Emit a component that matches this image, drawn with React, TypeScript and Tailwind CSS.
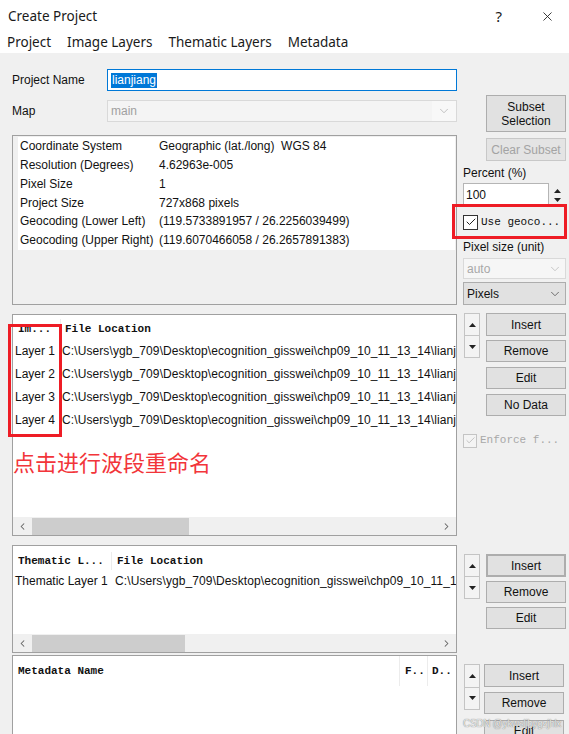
import React from "react";
import { ChevronDown, ChevronLeft, ChevronRight, X, Check } from "lucide-react";

const ui = "font-['Liberation_Sans',Arial,sans-serif]";
const mono = "font-['Liberation_Mono','DejaVu_Sans_Mono',monospace]";

const info = [
  ["Coordinate System", "Geographic (lat./long)  WGS 84"],
  ["Resolution (Degrees)", "4.62963e-005"],
  ["Pixel Size", "1"],
  ["Project Size", "727x868 pixels"],
  ["Geocoding (Lower Left)", "(119.5733891957 / 26.2256039499)"],
  ["Geocoding (Upper Right)", "(119.6070466058 / 26.2657891383)"],
];

const path = "C:\\Users\\ygb_709\\Desktop\\ecognition_gisswei\\chp09_10_11_13_14\\lianjiang\\layer";

const Btn = ({ children, className = "" }: { children: React.ReactNode; className?: string }) => (
  <div className={`flex items-center justify-center border border-[#adadad] bg-[#e1e1e1] text-[12px] leading-[14px] text-[#111] ${className}`}>
    {children}
  </div>
);

const Tri = ({ up }: { up?: boolean }) => (
  <svg width="7" height="4" viewBox="0 0 7 4">
    <path d={up ? "M0 4 L3.5 0 L7 4 Z" : "M0 0 L7 0 L3.5 4 Z"} fill="#222" />
  </svg>
);

const UpDown = ({ className = "" }: { className?: string }) => (
  <div className={`flex w-[16px] flex-col border border-[#c4c4c4] bg-[#f3f3f3] ${className}`}>
    <div className="flex flex-1 items-center justify-center border-b border-[#c4c4c4]">
      <Tri up />
    </div>
    <div className="flex flex-1 items-center justify-center">
      <Tri />
    </div>
  </div>
);

const HScroll = ({ thumb }: { thumb: string }) => (
  <div className="flex h-[18px] items-center bg-[#f0f0f0]">
    <div className="flex w-[19px] justify-center">
      <ChevronLeft size={11} strokeWidth={2.2} color="#606060" />
    </div>
    <div className={`h-[17px] bg-[#cdcdcd] ${thumb}`} />
    <div className="flex-1" />
    <div className="flex w-[19px] justify-center">
      <ChevronRight size={11} strokeWidth={2.2} color="#606060" />
    </div>
  </div>
);

export default function App() {
  return (
    <div className={`relative h-[734px] w-[569px] overflow-hidden bg-[#f0f0f0] ${ui}`}>
      {/* Title + menu */}
      <div className="h-[53px] bg-white font-['Noto_Sans','Open_Sans',sans-serif] text-[#1a1a1a]">
        <div className="flex h-[32px] items-center justify-between pl-[8px] pr-[14px]">
          <span className="text-[13.5px]">Create Project</span>
          <div className="flex items-center gap-[38px]">
            <span className="text-[15px]">?</span>
            <X size={15} strokeWidth={1.4} color="#222" />
          </div>
        </div>
        <div className="flex h-[21px] items-center gap-[16px] px-[7px] text-[13.5px]">
          <span>Project</span>
          <span>Image Layers</span>
          <span>Thematic Layers</span>
          <span>Metadata</span>
        </div>
      </div>

      <div className="flex gap-[6px] px-[12px] text-[12px] text-[#111]">
        {/* Left column */}
        <div className="flex w-[445px] flex-col">
          <div className="mt-[16px] flex h-[22px] items-center">
            <span className="w-[95px]">Project Name</span>
            <div className="flex h-[22px] w-[350px] items-center border border-[#0078d7] bg-white pl-[3px]">
              <span className="bg-[#0078d7] px-[1px] leading-[15px] text-white">lianjiang</span>
            </div>
          </div>
          <div className="mt-[9px] flex h-[22px] items-center">
            <span className="w-[95px]">Map</span>
            <div className="flex h-[22px] w-[350px] items-center border border-[#d9d9d9] bg-[#f4f4f4]">
              <span className="flex-1 pl-[3px] text-[#a0a0a0]">main</span>
              <div className="flex h-full w-[24px] items-center justify-center bg-[#f8f8f8]">
                <ChevronDown size={14} strokeWidth={1.3} color="#b0b0b0" />
              </div>
            </div>
          </div>

          {/* Info box */}
          <div className="mt-[13px] h-[170px] border border-[#a0a0a0] pl-[5px] pr-[1px] pt-[1px]">
            <div className="bg-white">
              {info.map(([k, v]) => (
                <div key={k} className="flex h-[18.75px] items-center pl-[2px]">
                  <span className="w-[139px]">{k}</span>
                  <span className="whitespace-pre">{v}</span>
                </div>
              ))}
            </div>
          </div>

          {/* Image layers list */}
          <div className="relative mt-[9px] flex h-[222px] flex-col border border-[#a0a0a0] bg-white">
            <div className="flex h-[24px] items-center pt-[4px]">
              <span className={`w-[47px] pl-[5px] text-[11px] font-bold ${mono}`}>Im...</span>
              <div className="h-[20px] w-px bg-[#ececec]" />
              <span className={`pl-[4px] text-[11px] font-bold ${mono}`}>File Location</span>
            </div>
            {[1, 2, 3, 4].map((n) => (
              <div key={n} className="flex h-[23px] items-center overflow-hidden whitespace-nowrap">
                <span className="w-[49px] shrink-0 pl-[2px]">Layer {n}</span>
                <span className="tracking-[0.1px]">{path}</span>
              </div>
            ))}
            <div className="mt-[17px] font-['Noto_Sans_CJK_SC',sans-serif] text-[22px] leading-[26px] text-[#f2353a]">
              点击进行波段重命名
            </div>
            <div className="flex-1" />
            <HScroll thumb="w-[157px]" />
            <div className="absolute left-[-5px] top-[9px] h-[113px] w-[54px] border-[3px] border-[#ee1c25]" />
          </div>

          {/* Thematic list */}
          <div className="mt-[9px] flex h-[108px] flex-col border border-[#a0a0a0] bg-white">
            <div className="flex h-[26px] items-center pt-[4px]">
              <span className={`w-[98px] pl-[5px] text-[11px] font-bold ${mono}`}>Thematic L...</span>
              <div className="h-[18px] w-px bg-[#ececec]" />
              <span className={`pl-[5px] text-[11px] font-bold ${mono}`}>File Location</span>
            </div>
            <div className="flex h-[18px] items-center overflow-hidden whitespace-nowrap">
              <span className="w-[102px] shrink-0 pl-[2px]">Thematic Layer 1</span>
              <span className="tracking-[0.1px]">{path}</span>
            </div>
            <div className="flex-1" />
            <HScroll thumb="w-[153px]" />
          </div>

          {/* Metadata list */}
          <div className="mt-[2px] h-[90px] border border-[#a0a0a0] bg-white">
            <div className="flex h-[30px] items-center">
              <span className={`flex-1 pl-[5px] text-[11px] font-bold ${mono}`}>Metadata Name</span>
              <div className="h-[30px] w-px bg-[#ececec]" />
              <span className={`w-[27px] pl-[5px] text-[11px] font-bold ${mono}`}>F..</span>
              <div className="h-[30px] w-px bg-[#ececec]" />
              <span className={`w-[28px] pl-[4px] text-[11px] font-bold ${mono}`}>D..</span>
            </div>
          </div>
        </div>

        {/* Right column */}
        <div className="flex w-[103px] flex-col">
          <Btn className="ml-[23px] mt-[42px] h-[37px] w-[80px] flex-col">
            <span>Subset</span>
            <span>Selection</span>
          </Btn>
          <div className="ml-[23px] mt-[6px] flex h-[23px] w-[80px] items-center justify-center border border-[#c8c8c8] bg-[#e4e4e4] text-[#a3a3a3]">
            Clear Subset
          </div>
          <div className="mt-[4px] h-[16px] leading-[16px]">Percent (%)</div>
          <div className="mt-[2px] flex h-[24px] items-stretch">
            <div className="flex w-[86px] items-center border border-[#b5b5b5] bg-white pl-[2px]">100</div>
            <div className="flex w-[17px] flex-col items-center justify-around py-[3px]">
              <Tri up />
              <Tri />
            </div>
          </div>
          <div className="relative mt-[7px] flex h-[16px] items-center">
            <div className="flex h-[15px] w-[15px] items-center justify-center border border-[#333] bg-white">
              <Check size={12} strokeWidth={2} color="#222" />
            </div>
            <span className={`ml-[3px] text-[11px] ${mono}`}>Use geoco...</span>
            <div className="absolute left-[-11px] top-[-10px] h-[35px] w-[115px] border-[3px] border-[#ee1c25]" />
          </div>
          <div className="mt-[9px] h-[16px] leading-[16px]">Pixel size (unit)</div>
          <div className="mt-[3px] flex h-[21px] items-center border border-[#d9d9d9] bg-[#f6f6f6]">
            <span className="flex-1 pl-[3px] text-[#a8a8a8]">auto</span>
            <div className="flex w-[20px] justify-center">
              <ChevronDown size={14} strokeWidth={1.3} color="#b8b8b8" />
            </div>
          </div>
          <div className="mt-[3px] flex h-[23px] items-center border border-[#adadad] bg-[#e1e1e1]">
            <span className="flex-1 pl-[3px]">Pixels</span>
            <div className="flex w-[20px] justify-center">
              <ChevronDown size={14} strokeWidth={1.4} color="#555" />
            </div>
          </div>

          {/* Image layer buttons */}
          <div className="mt-[8px] flex">
            <UpDown className="ml-[1px] h-[45px]" />
            <div className="ml-[6px] flex w-[80px] flex-col">
              <Btn className="h-[23px]">Insert</Btn>
              <Btn className="mt-[4px] h-[22px]">Remove</Btn>
              <Btn className="mt-[5px] h-[22px]">Edit</Btn>
              <Btn className="mt-[5px] h-[22px]">No Data</Btn>
            </div>
          </div>
          <div className="mt-[17px] flex h-[15px] items-center">
            <div className="flex h-[14px] w-[14px] items-center justify-center border border-[#c4c4c4] bg-[#f4f4f4]">
              <Check size={11} strokeWidth={2} color="#bdbdbd" />
            </div>
            <span className={`ml-[3px] text-[11px] text-[#a8a8a8] ${mono}`}>Enforce f...</span>
          </div>

          {/* Thematic buttons */}
          <div className="mt-[106px] flex">
            <UpDown className="ml-[1px] h-[45px]" />
            <div className="ml-[6px] flex w-[80px] flex-col">
              <Btn className="h-[23px] border-[2px] border-[#2f86d8]">Insert</Btn>
              <Btn className="mt-[4px] h-[22px]">Remove</Btn>
              <Btn className="mt-[4px] h-[22px]">Edit</Btn>
            </div>
          </div>

          {/* Metadata buttons */}
          <div className="mt-[35px] flex">
            <UpDown className="ml-[1px] h-[46px]" />
            <div className="ml-[4px] flex w-[80px] flex-col">
              <Btn className="h-[23px]">Insert</Btn>
              <Btn className="mt-[5px] h-[22px]">Remove</Btn>
              <Btn className="mt-[6px] h-[22px]">Edit</Btn>
            </div>
          </div>
        </div>
      </div>

      {/* watermark */}
      <div className="absolute left-[463px] top-[716px] whitespace-nowrap text-[10px] tracking-[-0.3px] text-[#eaeaea] [text-shadow:0_0_1px_#555]">
        CSDN @ykwsljbygzjhlx
      </div>
    </div>
  );
}
